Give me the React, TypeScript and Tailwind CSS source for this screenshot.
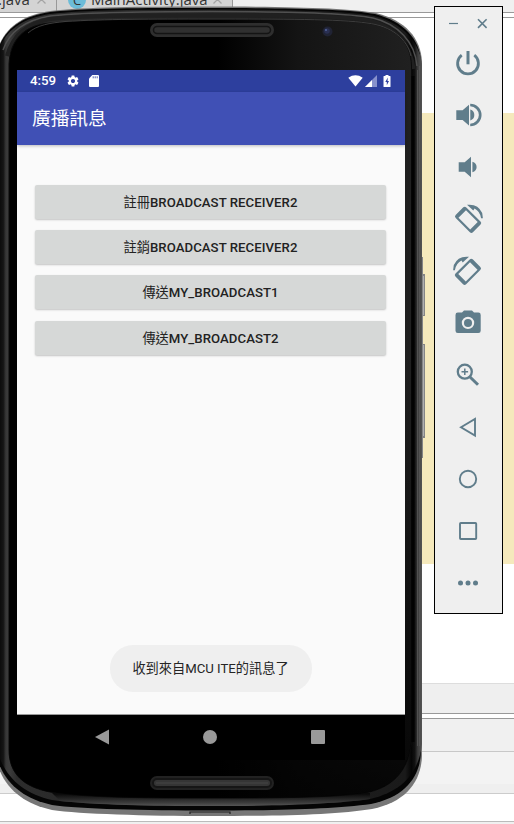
import type { ReactNode } from 'react';
import { MdSettings } from 'react-icons/md';

function Glyph({ children }: { children: ReactNode }) {
  return (
    <svg viewBox="0 0 30 30" className="block h-[30px] w-[30px] shrink-0 fill-[#607d8b]">
      {children}
    </svg>
  );
}

function RotateShape() {
  return (
    <>
      <path
        fillRule="evenodd"
        transform="translate(15.1 15.8) rotate(-45)"
        d="M-5.4-12.2H5.4Q7.5-12.2 7.5-10V10Q7.5 12.2 5.4 12.2H-5.4Q-7.5 12.2-7.5 10V-10Q-7.5-12.2-5.4-12.2ZM-5.3-8.3V8.3H5.3V-8.3Z"
      />
      <path d="M14 .8Q25-.5 29.2 9L29.9 14.3H28.1Q27 7.400 21.5 4.600L20.300 6.600Z" />
    </>
  );
}

function Toolbar() {
  return (
    <aside className="absolute left-[434px] top-[6px] flex h-[608px] w-[69px] flex-col border border-black bg-[#efefef]">
      <div className="flex h-[41px] w-full shrink-0 items-start justify-between px-[14px] pt-[11px]">
        <svg viewBox="0 0 10 11" className="h-[11px] w-[10px] stroke-[#607d8b] stroke-[1.2]">
          <path d="M0 5.500H9" />
        </svg>
        <svg viewBox="0 0 11 11" className="h-[11px] w-[11px] stroke-[#607d8b] stroke-[1.6]">
          <path d="M1 1.300l8.600 8.600M9.600 1.300L1 9.900" />
        </svg>
      </div>
      <div className="flex flex-col gap-[22px] pl-[18px]">
        <Glyph>
          <path d="M8.700 7.200A10.400 10.400 0 1 0 21.300 7.200" fill="none" stroke="#607d8b" strokeWidth="2.800" />
          <path d="M13.500 3h3v13.300h-3z" />
        </Glyph>
        <Glyph>
          <path d="M3.300 10.200h6.300L16 4.700v20.800l-6.400-5.600H3.300zM17.300 9.600q4 1.200 4 5.400t-4 5.400z" />
          <path d="M17.200 5a10 10 0 0 1 0 20" fill="none" stroke="#607d8b" strokeWidth="2.700" />
        </Glyph>
        <Glyph>
          <path d="M5.700 10.300h6L18 4.800v20.400l-6.300-5.500h-6zM19.400 9.800q4.200 1.200 4.200 5.200t-4.200 5.200z" />
        </Glyph>
        <Glyph>
          <RotateShape />
        </Glyph>
        <Glyph>
          <g transform="translate(30 0) scale(-1 1)">
            <RotateShape />
          </g>
        </Glyph>
        <Glyph>
          <path
            fillRule="evenodd"
            d="M11 2.400h8l2 2.200h4.400q2.300 0 2.300 2.300v15.800q0 2.400-2.300 2.400H4.800q-2.300 0-2.300-2.400V6.900q0-2.300 2.300-2.300H9zM15 8.700a6.200 6.200 0 1 0 0 12.400a6.200 6.200 0 1 0 0-12.400z"
          />
          <circle cx="15" cy="14.900" r="4" />
        </Glyph>
        <Glyph>
          <circle cx="11.800" cy="11.700" r="7" fill="none" stroke="#607d8b" strokeWidth="2.300" />
          <path d="M17 17l8 7.800" fill="none" stroke="#607d8b" strokeWidth="3" />
          <path d="M8.500 11.700h6.600M11.800 8.400V15" fill="none" stroke="#607d8b" strokeWidth="1.500" />
        </Glyph>
        <Glyph>
          <path d="M8 15.200L22 7v16.500z" fill="none" stroke="#607d8b" strokeWidth="1.900" />
        </Glyph>
        <Glyph>
          <circle cx="15" cy="15" r="8.200" fill="none" stroke="#607d8b" strokeWidth="1.900" />
        </Glyph>
        <Glyph>
          <rect x="7" y="7" width="16.200" height="16" rx=".8" fill="none" stroke="#607d8b" strokeWidth="1.900" />
        </Glyph>
        <Glyph>
          <circle cx="7.500" cy="15" r="2.500" />
          <circle cx="15" cy="15" r="2.500" />
          <circle cx="22.500" cy="15" r="2.500" />
        </Glyph>
      </div>
    </aside>
  );
}

function PhoneBody() {
  return (
    <svg viewBox="0 0 430 824" className="absolute left-0 top-0 h-[824px] w-[430px]" fill="none">
      <defs>
        <linearGradient id="rim" gradientUnits="userSpaceOnUse" x1="0" x2="422" y1="0" y2="0">
          <stop offset="0" stopColor="#0c0c0c" />
          <stop offset=".008" stopColor="#151515" />
          <stop offset=".014" stopColor="#383838" />
          <stop offset=".022" stopColor="#3c3c3c" />
          <stop offset=".04" stopColor="#2c2c2c" />
          <stop offset=".96" stopColor="#1a1a1a" />
          <stop offset=".975" stopColor="#050505" />
          <stop offset=".983" stopColor="#111" />
          <stop offset=".99" stopColor="#3c3c3c" />
          <stop offset="1" stopColor="#555" />
        </linearGradient>
        <linearGradient id="topface" gradientUnits="userSpaceOnUse" x1="9" x2="411" y1="0" y2="0">
          <stop offset="0" stopColor="#000" />
          <stop offset=".52" stopColor="#000" />
          <stop offset=".72" stopColor="#141414" />
          <stop offset="1" stopColor="#202020" />
        </linearGradient>
        <linearGradient id="fade" gradientUnits="userSpaceOnUse" x1="0" x2="0" y1="350" y2="790">
          <stop offset="0" stopColor="#000" stopOpacity="0" />
          <stop offset="1" stopColor="#000" stopOpacity=".8" />
        </linearGradient>
        <linearGradient id="bottomrim" gradientUnits="userSpaceOnUse" x1="0" x2="0" y1="794" y2="806">
          <stop offset="0" stopColor="#0a0a0a" />
          <stop offset=".7" stopColor="#3a3a3a" />
          <stop offset="1" stopColor="#555" />
        </linearGradient>
      </defs>
      <path d="M421 257h2v17h2v42h-2v28h2v94h-2v20h-2z" fill="#858585" />
      <path d="M423.500 276v39M423.500 345v91" stroke="#b0b0b0" />
      <path
        d="M-2 48C6 26 24 15 50 11C85 7 140 6.500 210 6.500C290 6.500 350 8 376 13C405 20 421 38 422 62V756C421 782 406 802 372 809C335 815 280 816 210 816C145 816 80 814 52 810C25 804 6 790 -2 766Z"
        fill="#777"
      />
      <path
        d="M-2 49C6 27 24 16 50 12C85 8 140 8 210 8C290 8 350 9 375 14C403 21 420 39 421 62V752C420 777 405 797 371 804C335 809 280 810.500 210 810.500C145 810.500 80 809 52 805C25 799 6 785 -2 761Z"
        fill="#050505"
      />
      <path
        d="M-2 51C6 29 24 18 50 14C85 10 140 9.500 210 9.500C290 9.500 350 11 374 16C402 23 419 41 422 64V744C419 771 404 791 370 799C335 804 280 806 210 806C145 806 80 804 52 800C25 794 6 779 -2 753Z"
        fill="url(#rim)"
      />
      <path
        d="M60 801C100 805 145 806 210 806C280 806 335 804 370 799V793H52Z"
        fill="url(#bottomrim)"
      />
      <path
        d="M3 50C10 30 26 20 50 16C85 12 140 11.500 210 11.500C290 11.500 350 13 373 18C398 24 415 42 417 66"
        stroke="#505050"
        strokeWidth="1.500"
      />
      <path
        d="M7 56C13 34 28 23 50 19C85 15 140 15.500 210 15.500C290 15.500 350 16 371 21C395 28 411 45 413.500 69"
        stroke="#202020"
        strokeWidth="4"
      />
      <path d="M417.500 70V746M419.700 66V746" stroke="#5c5c5c" strokeWidth=".7" />
      <path
        d="M9 64C10 40 24 25 50 23C90 19 150 19 210 19C280 19 340 19 367 23C396 27 411 42 411.500 66V742C408 773 391 788 365 793C330 798 270 798 210 798C150 798 88 798 50 792C24 787 9 774 9 750Z"
        fill="url(#topface)"
        stroke="#0b0b0b"
      />
      <path
        d="M9 350H411.500V742C408 773 391 788 365 793C330 798 270 798 210 798C150 798 88 798 50 792C24 787 9 774 9 750Z"
        fill="url(#fade)"
      />
      <path d="M28 33C37 25 50 23 65 21.500C105 19 150 19 210 19C280 19 340 19 367 23C392 26 407 39 411 56" stroke="#4a4a4a" strokeWidth=".8" />
      <path d="M413 76V742" stroke="#020202" strokeWidth="3" />
      <rect x="150" y="23" width="124" height="14" rx="7" fill="#2e2e2e" />
      <rect x="153.500" y="26.500" width="117" height="7" rx="3.500" fill="#303030" stroke="#141414" strokeWidth="1.500" />
      <rect x="150" y="776" width="124" height="14" rx="7" fill="#222" />
      <rect x="153" y="779" width="118" height="8" rx="4" fill="#353535" stroke="#161616" strokeWidth="2" />
      <path d="M156 783H268" stroke="#474747" />
      <circle cx="327.500" cy="31.500" r="5" fill="#202334" />
      <circle cx="327" cy="31" r="2.800" fill="#2a3053" />
      <circle cx="326" cy="30" r="1" fill="#53649b" />
      <path d="M190 814v-2h40v2" stroke="#222" strokeWidth="1.200" />
      <path d="M17 760V70H405V760Z" fill="#000" />
    </svg>
  );
}

function StatusBar() {
  return (
    <div className="flex h-[22px] shrink-0 items-center bg-[#2d3f9e] px-[13px] text-white">
      <span className="w-[26px] whitespace-nowrap text-[13.3px] font-medium leading-[22px]">4:59</span>
      <MdSettings className="ml-[10px] h-[14px] w-[14px]" />
      <svg viewBox="0 0 10 12" className="ml-[9px] h-[12px] w-[10px]">
        <path d="M3.300 0H9q1 0 1 1v10q0 1-1 1H1q-1 0-1-1V3.600z" fill="#fff" />
        <path d="M4.200 1.300v2M6.200 1.300v2M8.200 1.300v2" stroke="#2d3f9e" strokeWidth=".8" />
      </svg>
      <svg viewBox="0 0 15 12" className="ml-auto h-[12px] w-[15px]">
        <path d="M.3 2.700Q7.500-2 14.700 2.700L7.500 11.600z" fill="#fff" />
      </svg>
      <svg viewBox="0 0 12 12" className="ml-[2px] h-[12px] w-[12px]">
        <path d="M0 12L12 0V12z" fill="#8791cc" />
        <path d="M0 12L7 5V12z" fill="#fff" />
      </svg>
      <svg viewBox="0 0 8 12" className="ml-[6px] mr-px h-[12px] w-[8px]">
        <path d="M2.500 0h3v1H7q.5 0 .5.500V11.500q0 .5-.5.500H1q-.5 0-.5-.5v-10Q.5 1 1 1h1.500z" fill="#fff" />
        <path d="M4.800 2.500L2.300 7h1.500v3.300L6 6H4.500z" fill="#2d3f9e" />
      </svg>
    </div>
  );
}

const actions = [
  { verb: '註冊', target: 'BROADCAST RECEIVER2' },
  { verb: '註銷', target: 'BROADCAST RECEIVER2' },
  { verb: '傳送', target: 'MY_BROADCAST1' },
  { verb: '傳送', target: 'MY_BROADCAST2' },
];

function Screen() {
  return (
    <main className="absolute left-[17px] top-[70px] flex h-[690px] w-[388px] flex-col bg-[#fafafa] font-[Roboto,'Noto_Sans_CJK_TC',sans-serif]">
      <StatusBar />
      <header className="z-10 flex h-[53px] shrink-0 items-center bg-[#4050b5] pl-[15px] pt-px text-[18.7px] leading-[28px] text-white shadow-[0_1px_3px_rgba(0,0,0,0.25)]">
        廣播訊息
      </header>
      <section className="flex grow flex-col items-center border-b border-[#999] pl-[18px] pr-[19px] pt-[40px]">
        <div className="flex w-full flex-col gap-[11.200px]">
          {actions.map(({ verb, target }) => (
            <button
              key={verb + target}
              className="h-[34px] w-full whitespace-nowrap rounded-[2px] bg-[#d6d8d7] pt-px text-[13.2px] leading-[33px] tracking-[0.05px] text-[#222] shadow-[0_1px_2px_rgba(0,0,0,0.22)]"
            >
              {verb}
              <span className="font-medium">{target}</span>
            </button>
          ))}
        </div>
        <div className="mb-[22px] mt-auto flex h-[47px] w-[202px] items-center justify-center whitespace-nowrap rounded-[23px] bg-[#efefef] pt-px text-[13.2px] text-[#252525]">
          收到來自MCU ITE的訊息了
        </div>
      </section>
      <nav className="flex h-[45px] shrink-0 items-center justify-between bg-black pb-px pl-[77px] pr-[80px]">
        <svg viewBox="0 0 15 16" className="h-[16px] w-[15px] fill-[#999]">
          <path d="M1 8L15 .5v15z" />
        </svg>
        <div className="h-[14px] w-[14px] rounded-full bg-[#999]" />
        <div className="h-[14px] w-[14px] rounded-[1px] bg-[#999]" />
      </nav>
    </main>
  );
}

function TabClose() {
  return (
    <svg viewBox="0 0 9 9" className="-mt-[5px] h-[9px] w-[9px] shrink-0 stroke-[#a5a5a5] stroke-[1.3]">
      <path d="M.5.500l8 8M8.500.500l-8 8" />
    </svg>
  );
}

function EditorBackdrop() {
  return (
    <div className="flex h-full flex-col bg-white">
      <div className="flex h-[13px] shrink-0 overflow-hidden border-b border-[#999] bg-[#f0f0f0] font-['Open_Sans',sans-serif] text-[15px] leading-[15px] text-[#333]">
        <div className="flex w-[57px] shrink-0 border-r border-[#999] bg-[#d4d4d4]">
          <span className="-ml-[2px] -mt-[8px] w-[39px]">.java</span>
          <TabClose />
        </div>
        <div className="flex w-[176px] shrink-0 border-r border-[#999] bg-[#d4d4d4]">
          <span className="-mt-[9px] ml-[11px] h-[18px] w-[18px] rounded-full bg-[#6cbcd8] text-center text-[13px] leading-[18px]">C</span>
          <span className="-mt-[8px] ml-[5px] w-[122px] whitespace-nowrap">MainActivity.java</span>
          <TabClose />
        </div>
      </div>
      <div className="h-[5px] shrink-0 border-b border-[#999]" />
      <div className="h-[95px] shrink-0" />
      <div className="h-[451px] shrink-0 bg-[#f5e9bc]" />
      <div className="h-[119px] shrink-0" />
      <div className="h-[31px] shrink-0 border-b border-t border-b-[#999] border-t-[#ddd] bg-[#efefef]" />
      <div className="h-[5px] shrink-0 border-b border-[#999]" />
      <div className="h-[33px] shrink-0 border-b border-[#c8c8c8] bg-[#f0f0f0]" />
      <div className="h-[32px] shrink-0 bg-[#f3f3f3]" />
      <div className="h-[10px] shrink-0 border-b border-[#ccc] bg-[#efefef]" />
      <div className="h-[28px] shrink-0 border-b border-[#bbb]" />
      <div className="grow bg-[#f0f0f0]" />
    </div>
  );
}

export default function App() {
  return (
    <div className="relative h-[824px] w-[514px] overflow-hidden">
      <EditorBackdrop />
      <PhoneBody />
      <Screen />
      <Toolbar />
    </div>
  );
}
